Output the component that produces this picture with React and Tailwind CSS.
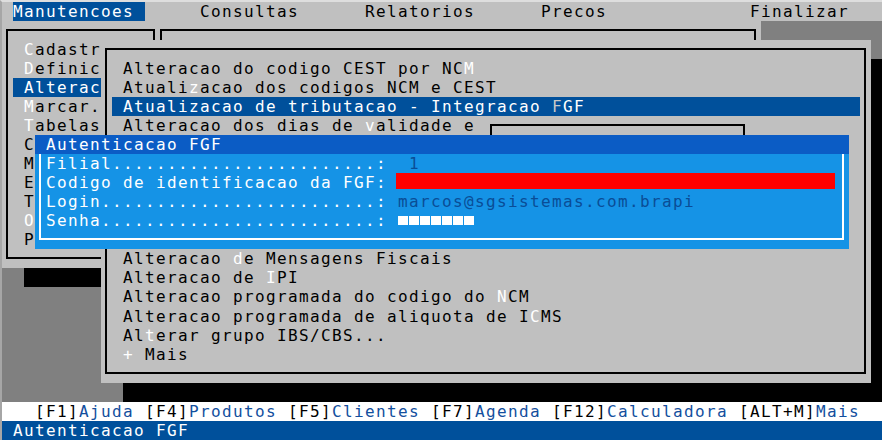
const GRAY = "bg-[#c0c0c0]";

function Hot({ a = "", k = "", b = "", kc = "text-white" }) {
  return (
    <>
      {a}
      <span className={kc}>{k}</span>
      {b}
    </>
  );
}

const label = (t) => t.padEnd(30, ".") + ":";

export default function App() {
  return (
    <div className="w-[882px] h-[440px] overflow-hidden bg-[#808080] border-t-2 border-l-2 border-t-[#dedede] border-l-[#a6a6a6] grid grid-cols-[repeat(80,11px)] grid-rows-[repeat(23,19.04px)] font-['DejaVu_Sans_Mono','Liberation_Mono',monospace] text-[16px] leading-[19.04px] tracking-[1.367px] text-black whitespace-pre">
      {/* menu bar */}
      <div className="col-start-1 col-span-80 row-start-1 bg-[#c0c0c0]">
        {" "}
        <span className="inline-block bg-[#00509b] text-white">Manutencoes </span>
        {"     Consultas      Relatorios      Precos             Finalizar"}
      </div>

      {/* Manutencoes dropdown (only the visible part of each item) */}
      <div className={"col-start-1 col-span-14 row-start-2 row-span-13 " + GRAY} />
      <div className="col-start-1 col-span-14 row-start-2 row-span-13 ml-[4px] mr-[1px] mt-[8px] mb-[9px] border-2 border-black" />
      <div className="col-start-3 col-span-7 row-start-3"><Hot k="C" b="adastr" /></div>
      <div className="col-start-3 col-span-7 row-start-4"><Hot k="D" b="efinic" /></div>
      <div className="col-start-2 col-span-8 row-start-5 bg-[#00509b] text-white pl-[11px]">Alterac</div>
      <div className="col-start-3 col-span-7 row-start-6"><Hot k="M" b="arcar." /></div>
      <div className="col-start-3 col-span-7 row-start-7"><Hot k="T" b="abelas" /></div>
      <div className="col-start-3 col-span-1 row-start-8">C</div>
      <div className="col-start-3 col-span-1 row-start-9">M</div>
      <div className="col-start-3 col-span-1 row-start-10">E</div>
      <div className="col-start-3 col-span-1 row-start-11">T</div>
      <div className="col-start-3 col-span-1 row-start-12 text-white">O</div>
      <div className="col-start-3 col-span-1 row-start-13">P</div>
      <div className="col-start-3 col-span-14 row-start-15 bg-black" />

      {/* Alteracoes submenu (behind) */}
      <div className={"col-start-15 col-span-55 row-start-2 row-span-18 " + GRAY} />
      <div className="col-start-15 col-span-55 row-start-2 row-span-18 ml-[4px] mr-[5px] mt-[8px] mb-[9px] border-2 border-black" />

      {/* main list */}
      <div className={"col-start-10 col-span-70 row-start-3 row-span-18 " + GRAY} />
      <div className="col-start-10 col-span-70 row-start-3 row-span-18 ml-[4px] mr-[5px] mt-[8px] mb-[9px] border-2 border-black" />
      <div className="col-start-12 col-span-66 row-start-4"><Hot a="Alteracao do codigo CEST por NC" k="M" /></div>
      <div className="col-start-12 col-span-66 row-start-5"><Hot a="Atuali" k="z" b="acao dos codigos NCM e CEST" /></div>
      <div className="col-start-11 col-span-68 row-start-6 bg-[#00509b] text-white pl-[11px]">
        <Hot a="Atualizacao de tributacao - Integracao " k="F" b="GF" kc="text-[#c8c8c8]" />
      </div>
      <div className="col-start-12 col-span-32 row-start-7"><Hot a="Alteracao dos dias de " k="v" b="alidade e" /></div>
      <div className="col-start-12 col-span-66 row-start-14"><Hot a="Alteracao " k="d" b="e Mensagens Fiscais" /></div>
      <div className="col-start-12 col-span-66 row-start-15"><Hot a="Alteracao de " k="I" b="PI" /></div>
      <div className="col-start-12 col-span-66 row-start-16"><Hot a="Alteracao programada do codigo do " k="N" b="CM" /></div>
      <div className="col-start-12 col-span-66 row-start-17"><Hot a="Alteracao programada de aliquota de I" k="C" b="MS" /></div>
      <div className="col-start-12 col-span-66 row-start-18"><Hot a="Al" k="t" b="erar grupo IBS/CBS..." /></div>
      <div className="col-start-12 col-span-66 row-start-19"><Hot k="+" b=" Mais" /></div>
      <div className="col-start-80 col-span-1 row-start-4 row-span-18 bg-black" />
      <div className="col-start-12 col-span-69 row-start-21 bg-black" />

      {/* window behind popup */}
      <div className={"col-start-45 col-span-24 row-start-7 row-span-6 " + GRAY} />
      <div className="col-start-45 col-span-24 row-start-7 row-span-6 ml-[4px] mr-[5px] mt-[8px] mb-[9px] border-2 border-black" />

      {/* Autenticacao FGF popup */}
      <div className="col-start-4 col-span-74 row-start-8 row-span-6 bg-[#1593e6]" />
      <div className="col-start-4 col-span-74 row-start-8 row-span-6 ml-[4px] mr-[5px] mt-[8px] mb-[9px] border-2 border-white" />
      <div className="col-start-4 col-span-74 row-start-8 bg-[#0b5cc5] text-white pl-[11px]">Autenticacao FGF</div>
      <div className="col-start-5 col-span-31 row-start-9 text-white">{label("Filial")}</div>
      <div className="col-start-5 col-span-31 row-start-10 text-white">{label("Codigo de identificacao da FGF")}</div>
      <div className="col-start-5 col-span-31 row-start-11 text-white">{label("Login")}</div>
      <div className="col-start-5 col-span-31 row-start-12 text-white">{label("Senha")}</div>
      <div className="col-start-38 col-span-2 row-start-9 text-[#0a4d96]">1</div>
      <div className="col-start-37 col-span-40 row-start-10 -ml-[2px] mr-[3px] mb-[3px] bg-[#ff0000]" />
      <div className="col-start-37 col-span-40 row-start-11 text-[#0a4d96]">marcos@sgsistemas.com.brapi</div>
      <div className="col-start-37 col-span-40 row-start-12 flex items-start pt-[5px] gap-[1px]">
        {[0, 1, 2, 3, 4, 5, 6].map((i) => (
          <span key={i} className="w-[10px] h-[9px] bg-white" />
        ))}
      </div>

      {/* status lines */}
      <div className="col-start-1 col-span-80 row-start-22 bg-white">
        {"   "}
        <Hot a="[F1]" k="Ajuda" b=" [F4]" kc="text-[#134f9e]" />
        <Hot k="Produtos" b=" [F5]" kc="text-[#134f9e]" />
        <Hot k="Clientes" b=" [F7]" kc="text-[#134f9e]" />
        <Hot k="Agenda" b=" [F12]" kc="text-[#134f9e]" />
        <Hot k="Calculadora" b=" [ALT+M]" kc="text-[#134f9e]" />
        <Hot k="Mais" kc="text-[#134f9e]" />
      </div>
      <div className="col-start-1 col-span-80 row-start-23 bg-[#00509b] text-white">{" Autenticacao FGF"}</div>
    </div>
  );
}
